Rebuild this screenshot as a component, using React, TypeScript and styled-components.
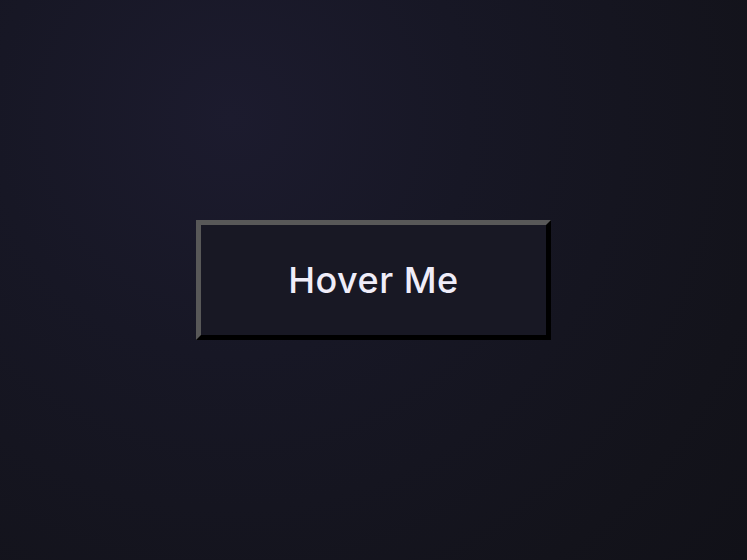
import React from "react";
import styled, { createGlobalStyle } from "styled-components";

const GlobalStyle = createGlobalStyle`
  html, body {
    margin: 0;
    padding: 0;
    height: 100%;
  }
  #root {
    height: 100%;
  }
`;

const Page = styled.div`
  width: 100%;
  height: 100vh;
  display: flex;
  align-items: center;
  justify-content: center;
  background: radial-gradient(
    circle at 31% 21%,
    #1c1b2e 0%,
    #171725 35%,
    #13131b 80%,
    #111118 100%
  );
`;

const Button = styled.button`
  box-sizing: border-box;
  width: 355px;
  height: 120px;
  border-width: 5px;
  border-style: solid;
  border-color: #585858 #000000 #000000 #585858;
  background: #181824;
  color: #efedf9;
  font-family: Inter, "Noto Sans", sans-serif;
  font-size: 36px;
  font-weight: 500;
  letter-spacing: 0.5px;
  cursor: pointer;
  padding: 0;
`;

export default function App() {
  return (
    <>
      <GlobalStyle />
      <Page>
        <Button type="button">Hover Me</Button>
      </Page>
    </>
  );
}
